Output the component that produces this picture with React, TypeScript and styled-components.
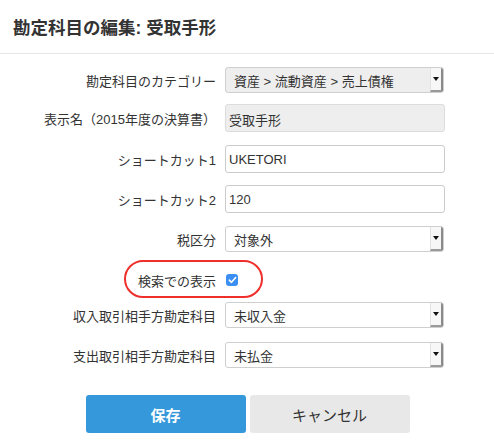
import React from "react";
import styled, { createGlobalStyle } from "styled-components";

const Global = createGlobalStyle`
  html, body { margin: 0; padding: 0; background: #fff; }
  body {
    font-family: "Liberation Sans", "Noto Sans CJK JP", Arial, sans-serif;
    color: #333;
    -webkit-font-smoothing: antialiased;
  }
`;

const Page = styled.div`
  width: 494px;
  height: 443px;
  background: #fff;
  overflow: hidden;
`;

const Header = styled.div`
  height: 53px;
  display: flex;
  align-items: center;
  padding-left: 13px;
  border-bottom: 1px solid #e5e5e5;
`;

const Title = styled.h1`
  margin: 0;
  font-size: 17.5px;
  font-weight: bold;
  color: #333;
`;

const Form = styled.div`
  display: flex;
  flex-direction: column;
`;

const Row = styled.div<{ $mt: number; $h?: number }>`
  position: relative;
  display: grid;
  grid-template-columns: 216px 219px;
  column-gap: 9px;
  align-items: center;
  margin-top: ${(p) => p.$mt}px;
  height: ${(p) => (p.$h ? `${p.$h}px` : "auto")};
`;

const Label = styled.label`
  text-align: right;
  font-size: 13px;
  color: #333;
  white-space: nowrap;
`;

const Input = styled.div<{ $disabled?: boolean }>`
  box-sizing: border-box;
  height: 28px;
  width: 220px;
  display: flex;
  align-items: ${(p) => (p.$disabled ? "flex-start" : "center")};
  padding: ${(p) => (p.$disabled ? "5px 3px 0" : "0 3px")};
  font-size: 13px;
  color: #333;
  background: ${(p) => (p.$disabled ? "#eeeeee" : "#fff")};
  border: 1px solid ${(p) => (p.$disabled ? "#dcdcdc" : "#cccccc")};
  border-radius: 3px;
`;

const Select = styled.div<{ $disabled?: boolean }>`
  box-sizing: border-box;
  height: 26px;
  width: 219px;
  display: flex;
  align-items: stretch;
  font-size: 13px;
  color: #333;
  background: ${(p) => (p.$disabled ? "#eeeeee" : "#fff")};
  border: 1px solid #cfcfcf;
  border-radius: 3px;
  overflow: hidden;
`;

const SelectText = styled.span`
  flex: 1;
  display: flex;
  align-items: center;
  padding-left: 8px;
`;

const Arrow = styled.span`
  box-sizing: border-box;
  width: 13px;
  display: flex;
  align-items: center;
  justify-content: center;
  background: #f7f7f7;
  border-left: 1px solid #e2e2e2;
  border-right: 2px solid #8a8a8a;
  border-bottom: 2px solid #9a9a9a;
  &::after {
    content: "";
    width: 0;
    height: 0;
    border-left: 3px solid transparent;
    border-right: 3px solid transparent;
    border-top: 4px solid #111;
  }
`;

const CheckCell = styled.div`
  display: flex;
  align-items: center;
  padding-left: 1px;
`;

const CheckBox = styled.span`
  width: 12px;
  height: 12px;
  border-radius: 3px;
  background: #3b8ff2;
  display: flex;
  align-items: center;
  justify-content: center;
`;

const Highlight = styled.div`
  position: absolute;
  left: 124px;
  top: -7px;
  width: 139px;
  height: 38px;
  box-sizing: border-box;
  border: 2.5px solid #ee2f2c;
  border-radius: 19px;
  pointer-events: none;
`;

const Buttons = styled.div`
  display: flex;
  justify-content: center;
  gap: 4px;
  margin-top: 27px;
  padding-left: 1px;
`;

const Button = styled.button<{ $primary?: boolean }>`
  width: 160px;
  height: 38px;
  border: none;
  border-radius: 3px;
  font-family: inherit;
  font-size: 15px;
  font-weight: ${(p) => (p.$primary ? "bold" : "normal")};
  color: ${(p) => (p.$primary ? "#fff" : "#333")};
  background: ${(p) => (p.$primary ? "#3498db" : "#e8e8e8")};
  cursor: pointer;
`;

function SelectBox({ value, disabled }: { value: string; disabled?: boolean }) {
  return (
    <Select $disabled={disabled}>
      <SelectText>{value}</SelectText>
      <Arrow />
    </Select>
  );
}

export default function App() {
  return (
    <Page>
      <Global />
      <Header>
        <Title>勘定科目の編集: 受取手形</Title>
      </Header>
      <Form>
        <Row $mt={13}>
          <Label>勘定科目のカテゴリー</Label>
          <SelectBox value="資産 > 流動資産 > 売上債権" disabled />
        </Row>
        <Row $mt={11}>
          <Label>表示名（2015年度の決算書）</Label>
          <Input $disabled>受取手形</Input>
        </Row>
        <Row $mt={13}>
          <Label>ショートカット1</Label>
          <Input>UKETORI</Input>
        </Row>
        <Row $mt={12}>
          <Label>ショートカット2</Label>
          <Input>120</Input>
        </Row>
        <Row $mt={13}>
          <Label>税区分</Label>
          <SelectBox value="対象外" />
        </Row>
        <Row $mt={15} $h={26}>
          <Label>検索での表示</Label>
          <CheckCell>
            <CheckBox>
              <svg width="9" height="8" viewBox="0 0 9 8">
                <path d="M1.3 4.2 L3.5 6.3 L7.7 1.5" fill="none" stroke="#fff" strokeWidth="1.6" strokeLinecap="round" strokeLinejoin="round" />
              </svg>
            </CheckBox>
          </CheckCell>
          <Highlight />
        </Row>
        <Row $mt={9}>
          <Label>収入取引相手方勘定科目</Label>
          <SelectBox value="未収入金" />
        </Row>
        <Row $mt={14}>
          <Label>支出取引相手方勘定科目</Label>
          <SelectBox value="未払金" />
        </Row>
        <Buttons>
          <Button $primary>保存</Button>
          <Button>キャンセル</Button>
        </Buttons>
      </Form>
    </Page>
  );
}
